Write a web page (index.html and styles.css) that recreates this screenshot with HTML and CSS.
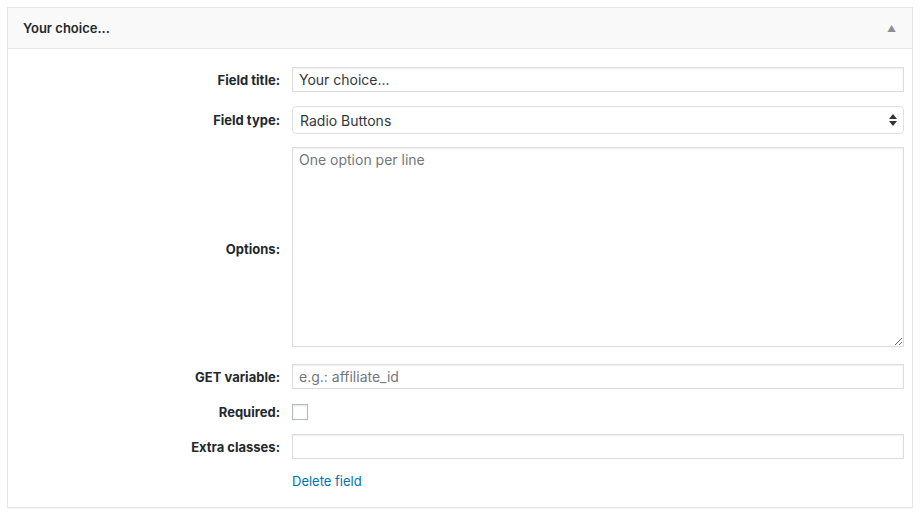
FILE: index.html
```html
<!doctype html>
<html lang="en">
  <head>
    <meta charset="UTF-8" />
    <title>Field settings</title>
    <link rel="stylesheet" href="styles.css">
  </head>
  <body>
    <div class="postbox">
      <div class="postbox-header">
        <h2>Your choice...</h2>
        <span class="toggle-arrow">&#9650;</span>
      </div>
      <div class="inside">
        <div class="field-row row-title">
          <label for="title">Field title:</label>
          <input type="text" id="title" value="Your choice..." />
        </div>
        <div class="field-row row-type">
          <label for="type">Field type:</label>
          <select id="type">
            <option>Radio Buttons</option>
          </select>
        </div>
        <div class="field-row row-options">
          <label for="options">Options:</label>
          <textarea id="options" placeholder="One option per line"></textarea>
        </div>
        <div class="field-row row-get">
          <label for="getvar">GET variable:</label>
          <input type="text" id="getvar" placeholder="e.g.: affiliate_id" />
        </div>
        <div class="field-row row-required">
          <label for="required">Required:</label>
          <input type="checkbox" id="required" class="checkbox" />
        </div>
        <div class="field-row row-classes">
          <label for="classes">Extra classes:</label>
          <input type="text" id="classes" />
        </div>
        <div class="field-row row-delete">
          <span></span>
          <a href="#" class="delete-link">Delete field</a>
        </div>
      </div>
    </div>
  </body>
</html>
```

FILE: styles.css
```css
body {
  margin: 0;
  padding: 7px;
  font-family: Inter, "Liberation Sans", sans-serif;
  font-size: 13px;
  color: #23282d;
  background: #fff;
}
.postbox {
  box-sizing: border-box;
  height: 501px;
  border: 1px solid #e5e5e5;
  box-shadow: 0 1px 1px rgba(0, 0, 0, 0.04);
}
.postbox-header {
  display: flex;
  align-items: center;
  justify-content: space-between;
  height: 40px;
  padding: 0 16px 0 15px;
  background: #f9f9f9;
  border-bottom: 1px solid #e5e5e5;
}
.postbox-header h2 {
  margin: 0;
  font-size: 13px;
  font-weight: 600;
}
.toggle-arrow {
  font-size: 9px;
  color: #8c8f94;
}
.inside {
  padding: 0 8px 0 0;
}
.field-row {
  display: grid;
  grid-template-columns: 272px 1fr;
  column-gap: 12px;
  align-items: center;
}
.field-row label {
  text-align: right;
  font-weight: 700;
  color: #23282d;
}
input[type="text"],
select,
textarea {
  box-sizing: border-box;
  width: 100%;
  margin: 0;
  font-family: inherit;
  font-size: 14px;
  color: #32373c;
  border: 1px solid #ddd;
  box-shadow: inset 0 1px 2px rgba(0, 0, 0, 0.07);
  background: #fff;
  outline: none;
}
input[type="text"] {
  height: 25px;
  padding: 0 6px;
}
::placeholder {
  color: #72777c;
}
select {
  appearance: none;
  height: 28px;
  padding: 0 24px 0 7px;
  border-radius: 4px;
  background: #fff url("data:image/svg+xml,%3Csvg xmlns='http://www.w3.org/2000/svg' width='8' height='12'%3E%3Cpath d='M4 0L8 5H0z M4 12L0 7h8z' fill='%23333'/%3E%3C/svg%3E") no-repeat right 6px center;
  box-shadow: none;
  border-color: #e0e0e0;
}
textarea {
  height: 200px;
  padding: 3px 6px;
  resize: vertical;
  line-height: 1.3;
}
.row-options label {
  padding-top: 4px;
}
.checkbox {
  appearance: none;
  width: 16px;
  height: 16px;
  margin: 0;
  border: 1px solid #b4b9be;
  background: #fff;
  box-shadow: inset 0 1px 2px rgba(0, 0, 0, 0.1);
}
.row-title {
  margin-top: 18px;
}
.row-type {
  margin-top: 14px;
}
.row-options {
  margin-top: 13px;
}
.row-get {
  margin-top: 17px;
}
.row-required {
  margin-top: 15px;
}
.row-classes {
  margin-top: 14px;
}
.row-delete {
  margin-top: 14px;
}
.delete-link {
  color: #0073aa;
  text-decoration: none;
}
```
